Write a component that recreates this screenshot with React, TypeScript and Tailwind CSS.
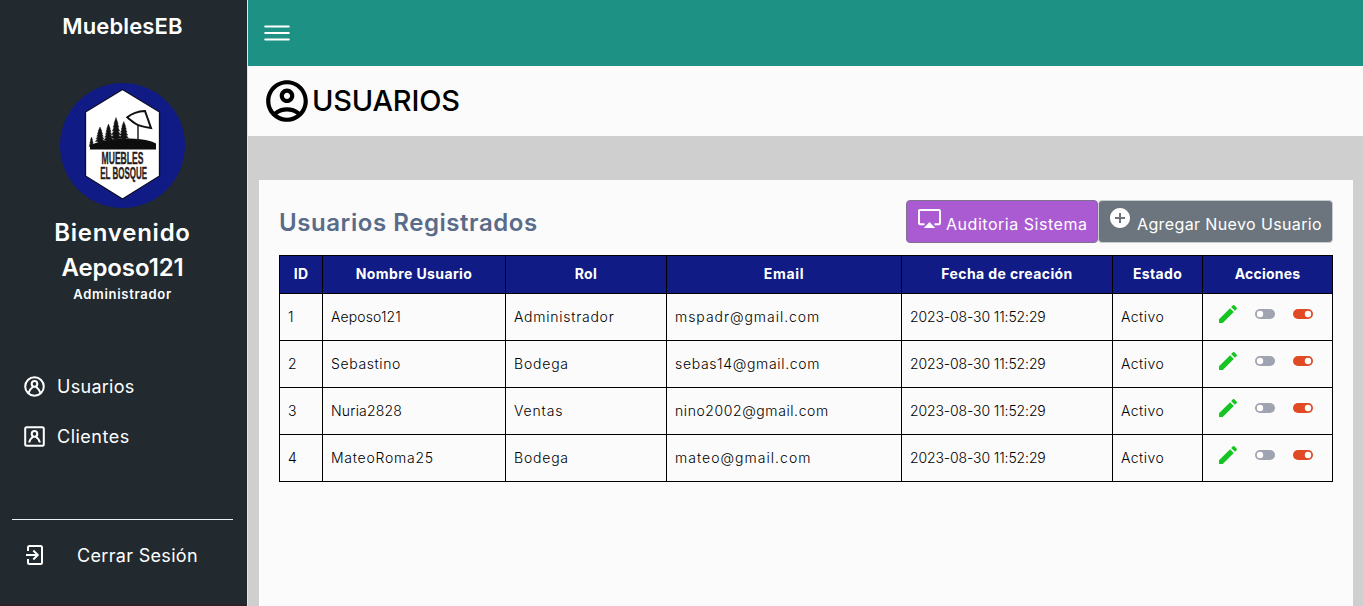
import type { ReactNode } from "react";
import { MdEdit, MdOutlineAccountCircle, MdAddCircle } from "react-icons/md";

function Tree({ x, top, bottom, w }: { x: number; top: number; bottom: number; w: number }) {
  const h = bottom - top;
  const tiers = [0.25, 0.4, 0.55, 0.7, 0.86];
  const edge = tiers.flatMap((t, i) => [
    [(w / 2) * (0.4 + i * 0.15), top + h * t],
    [w * (0.14 + i * 0.03), top + h * (t - 0.01)],
  ]);
  const points = [
    [x, top],
    ...edge.map(([dx, y]) => [x + dx, y]),
    [x + 0.8, bottom],
    [x - 0.8, bottom],
    ...[...edge].reverse().map(([dx, y]) => [x - dx, y]),
  ];
  return <polygon points={points.map((p) => p.join(",")).join(" ")} fill="#111" stroke="#111" strokeWidth="0.4" />;
}

function Logo() {
  return (
    <svg className="size-[125px] shrink-0 overflow-visible" viewBox="0 0 125 125">
      <circle cx="62.5" cy="62.5" r="62.5" fill="#111b85" />
      <path d="M62.5 6.5 99.5 29v64L62.5 116 25.5 93V29Z" fill="#fff" stroke="#0b0d2e" strokeWidth="1.3" />
      <path d="M30 66.500V62.500C42 56.500 58 55.300 70 55.500C82 55.700 91 57.500 96 60.500V66.500H30Z" fill="#0d0d0d" />
      <Tree x={31.5} top={54} bottom={65} w={5} />
      <Tree x={40} top={44} bottom={61} w={9.5} />
      <Tree x={48.5} top={41} bottom={60} w={9} />
      <Tree x={56} top={34.5} bottom={59} w={10.5} />
      <Tree x={63.8} top={38.5} bottom={58} w={9.5} />
      <path d="M78 42V58" stroke="#222" strokeWidth="1.5" />
      <path d="M67.300 34.300 C73 29.500 79 28.300 85 28 L91 45 C84 44 79 43 76 41 C73 39 70 37 67.300 34.300Z" fill="none" stroke="#111" strokeWidth="2" />
      <g fill="#2a1c1c" stroke="#2a1c1c" strokeWidth="0.4" fontFamily="'Liberation Sans', sans-serif" fontWeight="700" fontSize="16.8" textAnchor="middle">
        <text transform="translate(62.500 81) scale(0.51 1)">MUEBLES</text>
        <text transform="translate(63.700 96.200) scale(0.475 1)">EL BOSQUE</text>
      </g>
    </svg>
  );
}

function Person({ round }: { round?: boolean }) {
  return (
    <svg className="-mt-px size-[21px] shrink-0" viewBox="0 0 21 21" fill="none" stroke="currentColor" strokeWidth="2">
      {round ? <circle cx="10.5" cy="10.5" r="9.3" /> : <rect x="1.2" y="1.2" width="18.6" height="18.6" rx="1.5" />}
      <circle cx="10.5" cy="7.9" r="2.8" />
      {round ? (
        <path d="M4.500 17C5.300 13.500 7.500 11.800 9.300 10.400M16.500 17C15.700 13.500 13.500 11.800 11.700 10.400" />
      ) : (
        <path d="M5.300 16.500C5.300 13.500 7.500 11.800 9.300 10.400M15.700 16.500C15.700 13.500 13.500 11.800 11.700 10.400" />
      )}
    </svg>
  );
}

function ExitIcon() {
  return (
    <svg className="-mt-0.5 h-5 w-[18px] shrink-0" viewBox="0 0 18 20" fill="none" stroke="currentColor" strokeWidth="2">
      <path d="M2 6V2.500Q2 1 3.500 1H14.500Q16 1 16 2.500V17.500Q16 19 14.500 19H3.500Q2 19 2 17.500V14" />
      <path d="M0 10H11.500M7.300 5.500 11.800 10 7.300 14.500" />
    </svg>
  );
}

function ToggleIcon({ on }: { on?: boolean }) {
  return (
    <svg className="h-[10px] w-5" viewBox="0 0 20 10">
      <rect width="20" height="10" rx="5" fill={on ? "#e04a25" : "#a0a4b1"} />
      <circle cx={on ? 15 : 5} cy="5" r="3.2" fill="#fff" />
    </svg>
  );
}

function ScreenIcon() {
  return (
    <svg className="h-[20px] w-[23px]" viewBox="0 0 23 20">
      <path d="M6.500 15.200H2Q1 15.200 1 14.200V2Q1 1 2 1H21Q22 1 22 2V14.200Q22 15.200 21 15.200H16.500" fill="none" stroke="#fff" strokeWidth="1.900" />
      <path d="M5.800 19 11.500 13 17.200 19Z" fill="#fff" />
    </svg>
  );
}

const columns = [
  { label: "ID", tracking: "tracking-[0.3px]" },
  { label: "Nombre Usuario", tracking: "tracking-[0.4px]" },
  { label: "Rol", tracking: "tracking-[0.4px]" },
  { label: "Email", tracking: "tracking-[0.7px]" },
  { label: "Fecha de creación", tracking: "tracking-[0.4px]" },
  { label: "Estado", tracking: "tracking-[0.35px]" },
  { label: "Acciones", tracking: "tracking-[0.2px]" },
];

type Cell = [text: string, tracking: string];
const created: Cell = ["2023-08-30 11:52:29", "tracking-[-0.12px]"];
const active: Cell = ["Activo", "tracking-[0.45px]"];

const rows: Cell[][] = [
  [["1", ""], ["Aeposo121", "tracking-[0.12px]"], ["Administrador", "tracking-[0.75px]"], ["mspadr@gmail.com", "tracking-[0.96px]"], created, active],
  [["2", ""], ["Sebastino", "tracking-[0.62px]"], ["Bodega", "tracking-[0.8px]"], ["sebas14@gmail.com", "tracking-[0.66px]"], created, active],
  [["3", ""], ["Nuria2828", "tracking-[0.2px]"], ["Ventas", "tracking-[0.85px]"], ["nino2002@gmail.com", "tracking-[0.58px]"], created, active],
  [["4", ""], ["MateoRoma25", "tracking-[0.75px]"], ["Bodega", "tracking-[0.8px]"], ["mateo@gmail.com", "tracking-[1.02px]"], created, active],
];

function NavItem({ icon, children }: { icon: ReactNode; children: ReactNode }) {
  return (
    <a className="flex h-[50px] items-center gap-3 pl-6 text-lg">
      {icon}
      {children}
    </a>
  );
}

function Sidebar() {
  return (
    <aside className="flex h-full w-[248px] shrink-0 flex-col border-r border-[#e4e6e6] bg-[#222a2f] text-white">
      <h1 className="mt-[10px] pr-[2px] text-center text-[22px] leading-8 font-semibold tracking-[0.13px]">MueblesEB</h1>
      <div className="mt-[41px] flex flex-col items-center pr-[2px]">
        <Logo />
        <p className="mt-[7px] text-2xl leading-[35px] font-semibold tracking-[0.75px]">Bienvenido</p>
        <p className="text-2xl leading-[35px] font-semibold tracking-[-0.1px]">Aeposo121</p>
        <p className="text-[13px] leading-[18px] font-semibold tracking-[0.72px]">Administrador</p>
      </div>
      <nav className="mt-[59px]">
        <NavItem icon={<Person round />}><span className="tracking-[0.28px]">Usuarios</span></NavItem>
        <NavItem icon={<Person />}><span className="tracking-[0.5px]">Clientes</span></NavItem>
      </nav>
      <div className="mr-[14px] ml-3 mt-[57px] border-t border-[#e9f3f2] pt-[25px]">
        <a className="flex items-center gap-[33px] pl-[14px] text-lg leading-[21px]">
          <ExitIcon />
          <span className="tracking-[0.32px]">Cerrar Sesión</span>
        </a>
      </div>
      <div className="mt-auto h-[2px] bg-[#2b2229]" />
    </aside>
  );
}

function UsersTable() {
  return (
    <table className="mt-3 w-[1054px] table-fixed border-collapse text-sm text-black">
      <colgroup>
        <col className="w-[43px]" />
        <col className="w-[183px]" />
        <col className="w-[161px]" />
        <col className="w-[235px]" />
        <col className="w-[211px]" />
        <col className="w-[90px]" />
        <col className="w-[130px]" />
      </colgroup>
      <thead>
        <tr className="h-[38px] bg-[#111b85] text-white">
          {columns.map((c) => (
            <th key={c.label} className={`border border-black p-0 pb-[2px] text-center font-bold ${c.tracking}`}>{c.label}</th>
          ))}
        </tr>
      </thead>
      <tbody>
        {rows.map((row) => (
          <tr key={row[0][0]} className="h-[47px]">
            {row.map(([text, tracking], i) => (
              <td key={i} className={`border border-black py-0 pr-0 pl-2 font-light whitespace-nowrap ${tracking}`}>{text}</td>
            ))}
            <td className="border border-black p-0">
              <div className="flex items-center pb-[7px] pl-[13px]">
                <MdEdit className="mr-[15px] size-6 text-[#16c522]" />
                <span className="mr-[18px]"><ToggleIcon /></span>
                <ToggleIcon on />
              </div>
            </td>
          </tr>
        ))}
      </tbody>
    </table>
  );
}

export default function App() {
  return (
    <div className="flex h-[606px] w-[1363px] overflow-hidden bg-[#cfcfcf] font-['Inter',sans-serif]">
      <Sidebar />
      <main className="flex min-w-0 flex-1 flex-col">
        <header className="flex h-[66px] shrink-0 items-center bg-[#1c9184] pb-px pl-4">
          <svg className="h-4 w-[26px]" viewBox="0 0 26 16" stroke="#fff" strokeWidth="2" strokeLinecap="round">
            <path d="M1.200 1.500H24.800M1.200 8H24.800M1.200 14.500H24.800" />
          </svg>
        </header>
        <div className="flex h-[70px] shrink-0 items-center bg-[#fbfbfb] pl-[14px] text-black">
          <MdOutlineAccountCircle className="size-[50px]" />
          <h2 className="pb-px text-[29px] leading-none font-[450] tracking-[-0.2px]">USUARIOS</h2>
        </div>
        <section className="mt-11 mr-[10px] ml-[11px] flex-1 bg-[#fbfbfb] px-5 pt-5">
          <div className="flex h-[43px] w-[1054px] items-center justify-between">
            <h3 className="pt-[2px] text-2xl font-semibold tracking-[0.56px] text-[#5a6b8a]">Usuarios Registrados</h3>
            <div className="flex h-full">
              <button className="flex h-[43px] w-[192px] rounded-[4px] border border-[#7d7391] bg-[#ab5bd2] pt-2 pl-[11px] text-white">
                <ScreenIcon />
                <span className="mt-[3px] ml-[5px] whitespace-nowrap tracking-[0.53px]">Auditoria Sistema</span>
              </button>
              <button className="flex h-[43px] w-[235px] rounded-[4px] border border-[#c9cccf] bg-[#6c757d] pt-[5px] pl-[9px] text-white">
                <MdAddCircle className="size-6 shrink-0" />
                <span className="mt-[6px] ml-[5px] whitespace-nowrap tracking-[0.38px]">Agregar Nuevo Usuario</span>
              </button>
            </div>
          </div>
          <UsersTable />
        </section>
      </main>
    </div>
  );
}
